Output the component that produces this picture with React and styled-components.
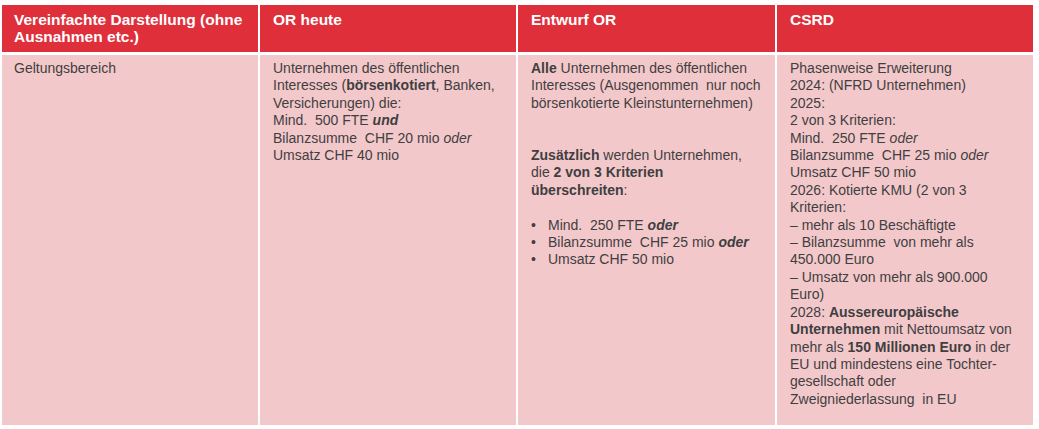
import React from "react";
import styled, { createGlobalStyle } from "styled-components";

const GlobalStyle = createGlobalStyle`
  body {
    margin: 0;
    background: #fff;
    font-family: "Liberation Sans", Arial, sans-serif;
  }
`;

const Page = styled.div`
  padding: 5px 0 0 2px;
`;

const Table = styled.div`
  display: grid;
  grid-template-columns: 256px 256px 257px 256px;
  grid-template-rows: 47px 370px;
  column-gap: 2px;
  row-gap: 3px;
  width: 1031px;
  background: #fff;
`;

const HeadCell = styled.div`
  background: #df2f3b;
  color: #fff;
  font-weight: bold;
  font-size: 15.5px;
  line-height: 17.4px;
  padding: 6px 8px 0 ${(p) => (p.$first ? 12 : 13)}px;
  white-space: nowrap;
`;

const BodyCell = styled.div`
  background: #f3c8cb;
  color: #3f3f3f;
  font-size: 14px;
  line-height: 17.4px;
  padding: 5px 8px 0 ${(p) => (p.$first ? 12 : 13)}px;
  white-space: nowrap;
`;

const Line = styled.div`
  min-height: 17.4px;
  white-space: pre;
`;

const Bullets = styled.ul`
  margin: 0;
  padding: 0;
  list-style: none;
`;

const Bullet = styled.li`
  display: flex;
  white-space: pre;
  &::before {
    content: "•";
    width: 17px;
    flex: none;
  }
`;

export default function App() {
  return (
    <Page>
      <GlobalStyle />
      <Table>
        <HeadCell $first>
          Vereinfachte Darstellung (ohne
          <br />
          Ausnahmen etc.)
        </HeadCell>
        <HeadCell>OR heute</HeadCell>
        <HeadCell>Entwurf OR</HeadCell>
        <HeadCell>CSRD</HeadCell>

        <BodyCell $first>Geltungsbereich</BodyCell>

        <BodyCell>
          <Line>Unternehmen des öffentlichen</Line>
          <Line>
            Interesses (<b>börsenkotiert</b>, Banken,
          </Line>
          <Line>Versicherungen) die:</Line>
          <Line>
            Mind.  500 FTE <b><i>und</i></b>
          </Line>
          <Line>
            Bilanzsumme  CHF 20 mio <i>oder</i>
          </Line>
          <Line>Umsatz CHF 40 mio</Line>
        </BodyCell>

        <BodyCell>
          <Line>
            <b>Alle</b> Unternehmen des öffentlichen
          </Line>
          <Line>Interesses (Ausgenommen  nur noch</Line>
          <Line>börsenkotierte Kleinstunternehmen)</Line>
          <Line />
          <Line />
          <Line>
            <b>Zusätzlich</b> werden Unternehmen,
          </Line>
          <Line>
            die <b>2 von 3 Kriterien</b>
          </Line>
          <Line>
            <b>überschreiten</b>:
          </Line>
          <Line />
          <Bullets>
            <Bullet>
              <span>
                Mind.  250 FTE <b><i>oder</i></b>
              </span>
            </Bullet>
            <Bullet>
              <span>
                Bilanzsumme  CHF 25 mio <b><i>oder</i></b>
              </span>
            </Bullet>
            <Bullet>
              <span>Umsatz CHF 50 mio</span>
            </Bullet>
          </Bullets>
        </BodyCell>

        <BodyCell>
          <Line>Phasenweise Erweiterung</Line>
          <Line>2024: (NFRD Unternehmen)</Line>
          <Line>2025:</Line>
          <Line>2 von 3 Kriterien:</Line>
          <Line>
            Mind.  250 FTE <i>oder</i>
          </Line>
          <Line>
            Bilanzsumme  CHF 25 mio <i>oder</i>
          </Line>
          <Line>Umsatz CHF 50 mio</Line>
          <Line>2026: Kotierte KMU (2 von 3</Line>
          <Line>Kriterien:</Line>
          <Line>– mehr als 10 Beschäftigte</Line>
          <Line>– Bilanzsumme  von mehr als</Line>
          <Line>450.000 Euro</Line>
          <Line>– Umsatz von mehr als 900.000</Line>
          <Line>Euro)</Line>
          <Line>
            2028: <b>Aussereuropäische</b>
          </Line>
          <Line>
            <b>Unternehmen</b> mit Nettoumsatz von
          </Line>
          <Line>
            mehr als <b>150 Millionen Euro</b> in der
          </Line>
          <Line>EU und mindestens eine Tochter-</Line>
          <Line>gesellschaft oder</Line>
          <Line>Zweigniederlassung  in EU</Line>
        </BodyCell>
      </Table>
    </Page>
  );
}
